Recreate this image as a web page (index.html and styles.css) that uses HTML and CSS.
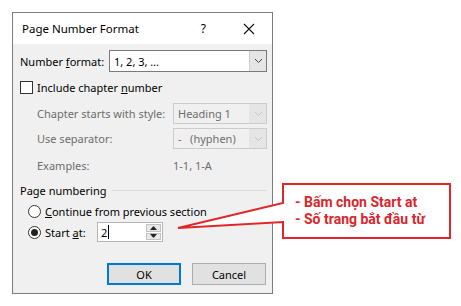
FILE: index.html
```html
<!DOCTYPE html>
<html>
<head>
	<title>Page Number Format</title>
	<link rel="stylesheet" href="styles.css">
</head>
<body>
	<div class="stage">
		<div class="dialog">
			<div class="titlebar">
				<span class="title">Page Number Format</span>
				<span class="help">?</span>
				<svg class="close" width="12" height="12" viewBox="0 0 12 12"><path d="M1 1 L11 11 M11 1 L1 11" stroke="#111" stroke-width="1.1" fill="none"/></svg>
			</div>
			<div class="body">
				<div class="row row-format">
					<span class="label">Number <u>f</u>ormat:</span>
					<div class="select wide">
						<span class="value">1, 2, 3, …</span>
						<span class="arrow"><svg width="9" height="6" viewBox="0 0 9 6"><path d="M1 1 L4.5 4.5 L8 1" stroke="#444" stroke-width="1" fill="none"/></svg></span>
					</div>
				</div>
				<div class="row row-check">
					<span class="checkbox"></span>
					<span>Include chapter <u>n</u>umber</span>
				</div>
				<div class="row row-sub">
					<span class="label sub">Chapter starts with style:</span>
					<div class="select narrow disabled">
						<span class="value">Heading 1</span>
						<span class="arrow"><svg width="9" height="6" viewBox="0 0 9 6"><path d="M1 1 L4.5 4.5 L8 1" stroke="#c4c4c4" stroke-width="1" fill="none"/></svg></span>
					</div>
				</div>
				<div class="row row-sub sep">
					<span class="label sub">Use separator:</span>
					<div class="select narrow disabled">
						<span class="value">-&nbsp;&nbsp;&nbsp;(hyphen)</span>
						<span class="arrow"><svg width="9" height="6" viewBox="0 0 9 6"><path d="M1 1 L4.5 4.5 L8 1" stroke="#c4c4c4" stroke-width="1" fill="none"/></svg></span>
					</div>
				</div>
				<div class="row row-examples">
					<span class="label sub">Examples:</span>
					<span class="example">1-1, 1-A</span>
				</div>
				<div class="row group">
					<span>Page numbering</span>
					<span class="rule"></span>
				</div>
				<div class="row row-radio">
					<span class="radio"></span>
					<span><u>C</u>ontinue from previous section</span>
				</div>
				<div class="row row-radio start">
					<span class="radio checked"></span>
					<span class="start-label">Start <u>a</u>t:</span>
					<div class="spin">
						<span class="spin-value">2<span class="caret"></span></span>
						<span class="spin-btns">
							<span class="spin-btn"><svg width="7" height="4" viewBox="0 0 7 4"><path d="M0 4 L3.5 0 L7 4 Z" fill="#222"/></svg></span>
							<span class="spin-btn"><svg width="7" height="4" viewBox="0 0 7 4"><path d="M0 0 L3.5 4 L7 0 Z" fill="#222"/></svg></span>
						</span>
					</div>
				</div>
				<div class="buttons">
					<button class="btn default">OK</button>
					<button class="btn">Cancel</button>
				</div>
			</div>
		</div>

		<div class="callout">
			<svg class="callout-shape" width="280" height="60" viewBox="0 0 280 60">
				<path d="M106 1 L273 1 L273 55 L106 55 L106 39 L1 45 L106 20 Z" fill="#fff" stroke="#e0262b" stroke-width="2" stroke-linejoin="miter"/>
			</svg>
			<div class="callout-text">
				<div>- Bấm chọn Start at</div>
				<div>- Số trang bắt đầu từ</div>
			</div>
		</div>
	</div>
</body>
</html>
```

FILE: styles.css
```css
body{
	margin: 0;
	padding: 0;
	background: #fff;
	font-family: 'Noto Sans', sans-serif;
	font-size: 11px;
	color: #000;
}
.stage{
	position: relative;
	width: 461px;
	height: 306px;
	padding: 12px 0 0 12px;
	box-sizing: border-box;
}
.dialog{
	width: 261px;
	height: 282px;
	border: 1px solid #7d7d7d;
	box-sizing: border-box;
	background: #f0f0f0;
	display: flex;
	flex-direction: column;
	white-space: nowrap;
}
.titlebar{
	height: 31px;
	background: #fff;
	display: flex;
	align-items: center;
	padding-left: 9px;
	flex-shrink: 0;
}
.title{
	font-size: 11.5px;
	flex: 1;
}
.help{
	font-size: 12px;
	margin-right: 37px;
}
.close{
	margin-right: 17px;
}
.body{
	padding: 6px 5px 0 7px;
	display: flex;
	flex-direction: column;
}
.row{
	display: flex;
	align-items: center;
}
.label{
	width: 89px;
	flex-shrink: 0;
}
.label.sub{
	width: 153px;
	padding-left: 17px;
	box-sizing: border-box;
	color: #6d6d6d;
}
.select{
	display: flex;
	align-items: stretch;
	height: 22px;
	box-sizing: border-box;
	border: 1px solid #7a7a7a;
	background: #fff;
}
.select.wide{
	width: 158px;
}
.select.narrow{
	width: 94px;
	height: 21px;
}
.select .value{
	flex: 1;
	padding-left: 4px;
	display: flex;
	align-items: center;
}
.select .arrow{
	width: 16px;
	background: #e5e5e5;
	border-left: 1px solid #cfcfcf;
	display: flex;
	align-items: center;
	justify-content: center;
}
.select.disabled{
	border-color: #cccccc;
	background: #f0f0f0;
	color: #6d6d6d;
}
.select.disabled .arrow{
	background: #e5e5e5;
	border-left-color: #e5e5e5;
}
.row-check{
	margin-top: 9px;
	height: 13px;
}
.checkbox{
	width: 13px;
	height: 13px;
	box-sizing: border-box;
	border: 1px solid #333;
	background: #fff;
	margin-right: 4px;
}
.row-sub{
	margin-top: 9px;
}
.row-sub.sep{
	margin-top: 4px;
}
.row-examples{
	margin-top: 8px;
	height: 16px;
	color: #6d6d6d;
}
.group{
	margin-top: 9px;
	height: 16px;
}
.rule{
	flex: 1;
	height: 1px;
	background: #dcdcdc;
	margin-left: 6px;
}
.row-radio{
	margin-top: 5px;
	height: 16px;
	padding-left: 8px;
}
.radio{
	width: 13px;
	height: 13px;
	box-sizing: border-box;
	border: 1px solid #333;
	border-radius: 50%;
	background: #fff;
	margin-right: 4px;
	position: relative;
}
.radio.checked::after{
	content: "";
	position: absolute;
	left: 2px;
	top: 2px;
	width: 7px;
	height: 7px;
	border-radius: 50%;
	background: #222;
}
.row-radio.start{
	margin-top: 3px;
	height: 20px;
}
.start-label{
	width: 52px;
}
.spin{
	width: 66px;
	height: 20px;
	box-sizing: border-box;
	border: 1px solid #b5b5b5;
	background: #fff;
	display: flex;
}
.spin-value{
	flex: 1;
	padding-left: 3px;
	display: flex;
	align-items: center;
}
.caret{
	width: 1px;
	height: 14px;
	background: #000;
	margin-left: 1px;
}
.spin-btns{
	width: 15px;
	margin: 1px 1px 1px 0;
	display: flex;
	flex-direction: column;
	gap: 1px;
}
.spin-btn{
	flex: 1;
	background: #e8e8e8;
	border: 1px solid #c2c2c2;
	display: flex;
	align-items: center;
	justify-content: center;
}
.buttons{
	margin-top: 21px;
	display: flex;
	justify-content: flex-end;
	gap: 11px;
	padding-right: 1px;
}
.btn{
	width: 74px;
	height: 22px;
	font-family: 'Noto Sans', sans-serif;
	font-size: 11px;
	background: #e1e1e1;
	border: 1px solid #adadad;
	padding: 0;
	color: #000;
}
.btn.default{
	border: 2px solid #0078d7;
}
.callout{
	position: absolute;
	left: 177px;
	top: 183px;
	width: 280px;
	height: 60px;
}
.callout-shape{
	position: absolute;
	left: 0;
	top: 0;
}
.callout-text{
	position: absolute;
	left: 118px;
	top: 11px;
	font-family: Roboto, sans-serif;
	font-weight: bold;
	font-size: 14px;
	line-height: 17px;
	color: #d9252b;
}
```
